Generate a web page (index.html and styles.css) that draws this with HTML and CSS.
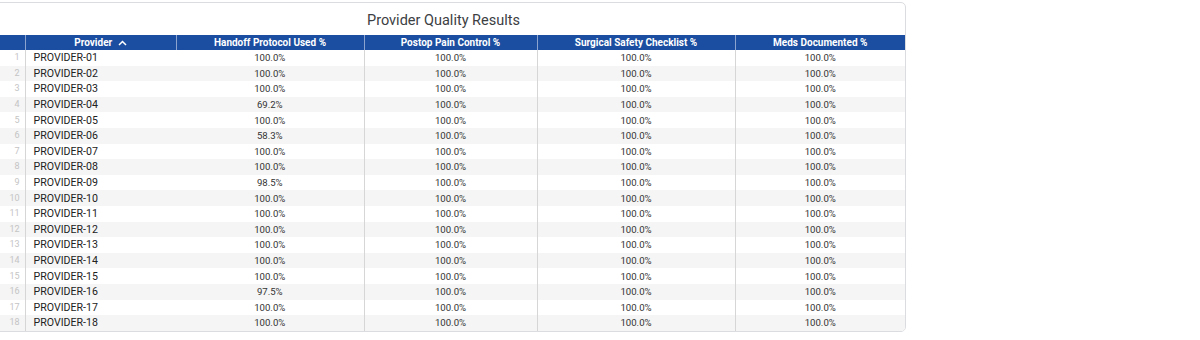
FILE: index.html
```html
<!DOCTYPE html>
<html>
<head>
<meta charset="utf-8">
<link rel="stylesheet" href="styles.css">
</head>
<body>
<div class="card">
  <div class="title">Provider Quality Results</div>
  <table class="grid">
    <colgroup>
      <col class="c-num"><col class="c-prov"><col class="c-hand"><col class="c-post"><col class="c-surg"><col class="c-meds">
    </colgroup>
    <thead>
      <tr>
        <th class="num"></th>
        <th class="sep-prov">Provider <svg class="sort" width="9" height="6" viewBox="0 0 9 6"><path d="M1 5 L4.5 1.5 L8 5" fill="none" stroke="#fff" stroke-width="1.5"/></svg></th>
        <th>Handoff Protocol Used %</th>
        <th>Postop Pain Control %</th>
        <th>Surgical Safety Checklist %</th>
        <th>Meds Documented %</th>
      </tr>
    </thead>
    <tbody>
      <tr><td class="num">1</td><td class="prov">PROVIDER-01</td><td>100.0%</td><td class="bl">100.0%</td><td class="bl">100.0%</td><td class="bl">100.0%</td></tr>
      <tr><td class="num">2</td><td class="prov">PROVIDER-02</td><td>100.0%</td><td class="bl">100.0%</td><td class="bl">100.0%</td><td class="bl">100.0%</td></tr>
      <tr><td class="num">3</td><td class="prov">PROVIDER-03</td><td>100.0%</td><td class="bl">100.0%</td><td class="bl">100.0%</td><td class="bl">100.0%</td></tr>
      <tr><td class="num">4</td><td class="prov">PROVIDER-04</td><td>69.2%</td><td class="bl">100.0%</td><td class="bl">100.0%</td><td class="bl">100.0%</td></tr>
      <tr><td class="num">5</td><td class="prov">PROVIDER-05</td><td>100.0%</td><td class="bl">100.0%</td><td class="bl">100.0%</td><td class="bl">100.0%</td></tr>
      <tr><td class="num">6</td><td class="prov">PROVIDER-06</td><td>58.3%</td><td class="bl">100.0%</td><td class="bl">100.0%</td><td class="bl">100.0%</td></tr>
      <tr><td class="num">7</td><td class="prov">PROVIDER-07</td><td>100.0%</td><td class="bl">100.0%</td><td class="bl">100.0%</td><td class="bl">100.0%</td></tr>
      <tr><td class="num">8</td><td class="prov">PROVIDER-08</td><td>100.0%</td><td class="bl">100.0%</td><td class="bl">100.0%</td><td class="bl">100.0%</td></tr>
      <tr><td class="num">9</td><td class="prov">PROVIDER-09</td><td>98.5%</td><td class="bl">100.0%</td><td class="bl">100.0%</td><td class="bl">100.0%</td></tr>
      <tr><td class="num">10</td><td class="prov">PROVIDER-10</td><td>100.0%</td><td class="bl">100.0%</td><td class="bl">100.0%</td><td class="bl">100.0%</td></tr>
      <tr><td class="num">11</td><td class="prov">PROVIDER-11</td><td>100.0%</td><td class="bl">100.0%</td><td class="bl">100.0%</td><td class="bl">100.0%</td></tr>
      <tr><td class="num">12</td><td class="prov">PROVIDER-12</td><td>100.0%</td><td class="bl">100.0%</td><td class="bl">100.0%</td><td class="bl">100.0%</td></tr>
      <tr><td class="num">13</td><td class="prov">PROVIDER-13</td><td>100.0%</td><td class="bl">100.0%</td><td class="bl">100.0%</td><td class="bl">100.0%</td></tr>
      <tr><td class="num">14</td><td class="prov">PROVIDER-14</td><td>100.0%</td><td class="bl">100.0%</td><td class="bl">100.0%</td><td class="bl">100.0%</td></tr>
      <tr><td class="num">15</td><td class="prov">PROVIDER-15</td><td>100.0%</td><td class="bl">100.0%</td><td class="bl">100.0%</td><td class="bl">100.0%</td></tr>
      <tr><td class="num">16</td><td class="prov">PROVIDER-16</td><td>97.5%</td><td class="bl">100.0%</td><td class="bl">100.0%</td><td class="bl">100.0%</td></tr>
      <tr><td class="num">17</td><td class="prov">PROVIDER-17</td><td>100.0%</td><td class="bl">100.0%</td><td class="bl">100.0%</td><td class="bl">100.0%</td></tr>
      <tr><td class="num">18</td><td class="prov">PROVIDER-18</td><td>100.0%</td><td class="bl">100.0%</td><td class="bl">100.0%</td><td class="bl">100.0%</td></tr>
    </tbody>
  </table>
</div>
</body>
</html>
```
FILE: styles.css
```css
html, body {
  margin: 0;
  padding: 0;
  background: #ffffff;
}
body {
  font-family: Roboto, "Liberation Sans", sans-serif;
}
.card {
  box-sizing: border-box;
  width: 925px;
  height: 330px;
  margin-top: 2px;
  margin-left: -19px;
  border: 1px solid #dadce0;
  border-radius: 5px;
  background: #fff;
  overflow: hidden;
}
.title {
  height: 32px;
  line-height: 36px;
  text-align: center;
  font-size: 14.5px;
  color: #3c4043;
  font-family: Roboto, sans-serif;
}
.grid {
  table-layout: fixed;
  border-collapse: collapse;
  width: 923px;
}
.c-num { width: 43px; }
.c-prov { width: 151px; }
.c-hand { width: 188px; }
.c-post { width: 173px; }
.c-surg { width: 198px; }
.c-meds { width: 170px; }
th {
  height: 15px;
  padding: 0;
  background: #1b4ea0;
  color: #fff;
  font-size: 10px;
  font-weight: 700;
  border-left: 1px solid #8aa3cf;
  text-align: center;
  white-space: nowrap;
  line-height: 15px;
}
th:first-child { border-left: none; }
.sort { margin-left: 3px; vertical-align: 0px; }
td {
  height: 15.6px;
  padding: 0;
  font-size: 9.6px;
  color: #333;
  text-align: center;
  line-height: 15px;
  white-space: nowrap;
}
tbody tr:nth-child(even) td { background: #f5f5f5; }
td.num {
  color: #c4c4c4;
  font-size: 9px;
  text-align: right;
  padding-right: 5px;
  border-right: 1px solid #d6d6d6;
}
td.prov {
  text-align: left;
  padding-left: 8px;
  font-family: Roboto, sans-serif;
  font-size: 10.6px;
  color: #222;
}
td.bl { border-left: 1px solid #d6d6d6; }
```
